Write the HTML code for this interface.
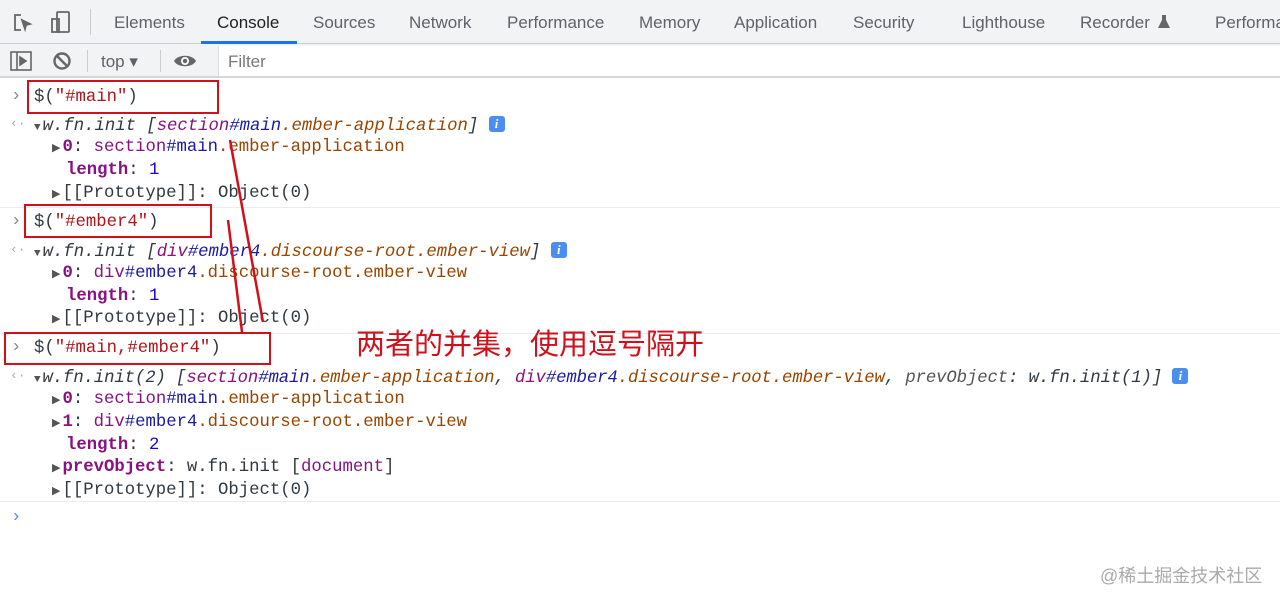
<!DOCTYPE html>
<html><head><meta charset="utf-8"><style>
*{margin:0;padding:0;box-sizing:border-box}
body{width:1280px;height:602px;background:#fff;position:relative;overflow:hidden;font-family:"Liberation Sans",sans-serif}
.a{position:absolute;white-space:pre}
.tabs{position:absolute;left:0;top:0;width:1280px;height:44px;background:#f1f3f4;border-bottom:1px solid #cbcdd1}
.tab{position:absolute;top:13px;font-size:17px;color:#5f6368}
.bar{position:absolute;left:0;top:44px;width:1280px;height:34px;background:#f1f3f4;border-bottom:2px solid #d6d7d9}
.m{font-family:"Liberation Mono",monospace;font-size:17.3px;color:#303942;margin-top:2px}
.k{color:#881280;font-weight:bold}.p{color:#881280}.b{color:#1a1aa6}.o{color:#994500}.s{color:#b0151a}.n{color:#1c00cf}
.i{font-style:italic}
.sep{position:absolute;left:0;width:1280px;height:1px;background:#ececec}
.rb{position:absolute;border:2.5px solid #d0101b}
.tri{font-size:11px;color:#555;margin-right:2px}
.info{display:inline-block;width:16px;height:16px;background:#4a8ef0;border-radius:3px;color:#fff;font:bold 13px "Liberation Serif",serif;text-align:center;line-height:16px;font-style:italic;vertical-align:2px}
</style></head><body>
<div class="tabs">
<svg class="a" style="left:12px;top:12px" width="22" height="22" viewBox="0 0 22 22" fill="none" stroke="#666" stroke-width="1.8"><path d="M9 3H3v15h6"/><path d="M10 8l8 4-4 1-1 4z" fill="#666"/></svg>
<svg class="a" style="left:50px;top:10px" width="22" height="24" viewBox="0 0 22 24" fill="none" stroke="#666" stroke-width="1.8"><rect x="7" y="2" width="12" height="20" rx="1"/><rect x="2" y="9" width="7" height="13"/></svg>
<div class="a" style="left:90px;top:9px;width:1px;height:26px;background:#ccc"></div>
<span class="tab a" style="left:114px">Elements</span>
<span class="tab a" style="left:217px;color:#202124">Console</span>
<div class="a" style="left:201px;top:41px;width:96px;height:3px;background:#1a73e8"></div>
<span class="tab a" style="left:313px">Sources</span>
<span class="tab a" style="left:409px">Network</span>
<span class="tab a" style="left:507px">Performance</span>
<span class="tab a" style="left:639px">Memory</span>
<span class="tab a" style="left:734px">Application</span>
<span class="tab a" style="left:853px">Security</span>
<span class="tab a" style="left:962px">Lighthouse</span>
<span class="tab a" style="left:1080px">Recorder</span>
<svg class="a" style="left:1157px;top:14px" width="14" height="15" viewBox="0 0 14 15"><path d="M4 1h6M5 1v5L1 14h12L9 6V1" fill="#666"/></svg>
<span class="tab a" style="left:1215px">Performa</span>
</div>
<div class="bar">
<svg class="a" style="left:10px;top:7px" width="22" height="20" viewBox="0 0 22 20" fill="none" stroke="#666" stroke-width="1.6"><rect x="1" y="1" width="20" height="18"/><path d="M7 1v18"/><path d="M10 6l6 4-6 4z" fill="#666"/></svg>
<svg class="a" style="left:52px;top:7px" width="20" height="20" viewBox="0 0 20 20" fill="none" stroke="#666" stroke-width="2.4"><circle cx="10" cy="10" r="7.5"/><path d="M5 5l10 10"/></svg>
<div class="a" style="left:87px;top:6px;width:1px;height:22px;background:#ccc"></div>
<span class="a" style="left:101px;top:8px;font-size:17px;color:#5f6368">top ▾</span>
<div class="a" style="left:160px;top:6px;width:1px;height:22px;background:#ccc"></div>
<svg class="a" style="left:173px;top:8px" width="24" height="18" viewBox="0 0 24 18"><path d="M1 9C5 2 19 2 23 9C19 16 5 16 1 9z" fill="#666"/><circle cx="12" cy="9" r="4" fill="#fff"/><circle cx="12" cy="9" r="2.2" fill="#666"/></svg>
<div class="a" style="left:218px;top:2px;width:1062px;height:30px;background:#fff;border-left:1px solid #ddd"></div>
<span class="a" style="left:228px;top:8px;font-size:17px;color:#777">Filter</span>
</div>

<div class="a m" style="left:11px;top:85px;color:#888">›</div>
<div class="a m" style="left:34px;top:86px">$(<span class="s">"#main"</span>)</div>
<div class="a m" style="left:10px;top:114px;color:#aaa;font-size:13px">‹·</div>
<div class="a m" style="left:34px;top:114px"><span class="tri">▼</span><span class="i">w.fn.init [<span class="p">section</span><span class="b">#main</span><span class="o">.ember-application</span>]</span> <span class="info">i</span></div>
<div class="a m" style="left:52px;top:136px"><span class="tri">▶</span><span class="k">0</span>: <span class="p">section</span><span class="b">#main</span><span class="o">.ember-application</span></div>
<div class="a m" style="left:66px;top:159px"><span class="k">length</span>: <span class="n">1</span></div>
<div class="a m" style="left:52px;top:182px"><span class="tri">▶</span>[[Prototype]]: Object(0)</div>
<div class="sep" style="top:207px"></div>

<div class="a m" style="left:11px;top:210px;color:#888">›</div>
<div class="a m" style="left:34px;top:211px">$(<span class="s">"#ember4"</span>)</div>
<div class="a m" style="left:10px;top:240px;color:#aaa;font-size:13px">‹·</div>
<div class="a m" style="left:34px;top:240px"><span class="tri">▼</span><span class="i">w.fn.init [<span class="p">div</span><span class="b">#ember4</span><span class="o">.discourse-root.ember-view</span>]</span> <span class="info">i</span></div>
<div class="a m" style="left:52px;top:262px"><span class="tri">▶</span><span class="k">0</span>: <span class="p">div</span><span class="b">#ember4</span><span class="o">.discourse-root.ember-view</span></div>
<div class="a m" style="left:66px;top:285px"><span class="k">length</span>: <span class="n">1</span></div>
<div class="a m" style="left:52px;top:307px"><span class="tri">▶</span>[[Prototype]]: Object(0)</div>
<div class="sep" style="top:333px"></div>

<div class="a m" style="left:11px;top:336px;color:#888">›</div>
<div class="a m" style="left:34px;top:337px">$(<span class="s">"#main,#ember4"</span>)</div>
<div class="a m" style="left:10px;top:366px;color:#aaa;font-size:13px">‹·</div>
<div class="a m" style="left:34px;top:366px;letter-spacing:-0.1px"><span class="tri">▼</span><span class="i">w.fn.init(2) [<span class="p">section</span><span class="b">#main</span><span class="o">.ember-application</span>, <span class="p">div</span><span class="b">#ember4</span><span class="o">.discourse-root.ember-view</span>, <span style="color:#555">prevObject</span>: w.fn.init(1)]</span> <span class="info">i</span></div>
<div class="a m" style="left:52px;top:388px"><span class="tri">▶</span><span class="k">0</span>: <span class="p">section</span><span class="b">#main</span><span class="o">.ember-application</span></div>
<div class="a m" style="left:52px;top:411px"><span class="tri">▶</span><span class="k">1</span>: <span class="p">div</span><span class="b">#ember4</span><span class="o">.discourse-root.ember-view</span></div>
<div class="a m" style="left:66px;top:434px"><span class="k">length</span>: <span class="n">2</span></div>
<div class="a m" style="left:52px;top:456px"><span class="tri">▶</span><span class="k">prevObject</span>: w.fn.init [<span class="p">document</span>]</div>
<div class="a m" style="left:52px;top:479px"><span class="tri">▶</span>[[Prototype]]: Object(0)</div>
<div class="sep" style="top:501px"></div>
<div class="a m" style="left:11px;top:506px;color:#4a8ef0">›</div>

<div class="rb" style="left:27px;top:80px;width:192px;height:34px"></div>
<div class="rb" style="left:24px;top:204px;width:188px;height:34px"></div>
<div class="rb" style="left:4px;top:332px;width:267px;height:33px"></div>
<svg class="a" style="left:0;top:0" width="1280" height="602"><path d="M230 140L263 322M228 220L242 332" stroke="#d0101b" stroke-width="2.5"/></svg>
<div class="a" style="left:356px;top:321px;font-size:29px;color:#d0101b;font-family:'Liberation Sans','Noto Sans CJK SC',sans-serif">两者的并集，使用逗号隔开</div>
<div class="a" style="left:1100px;top:562px;font-size:18px;color:#aaa;font-family:'Liberation Sans','Noto Sans CJK SC',sans-serif">@稀土掘金技术社区</div>
</body></html>
